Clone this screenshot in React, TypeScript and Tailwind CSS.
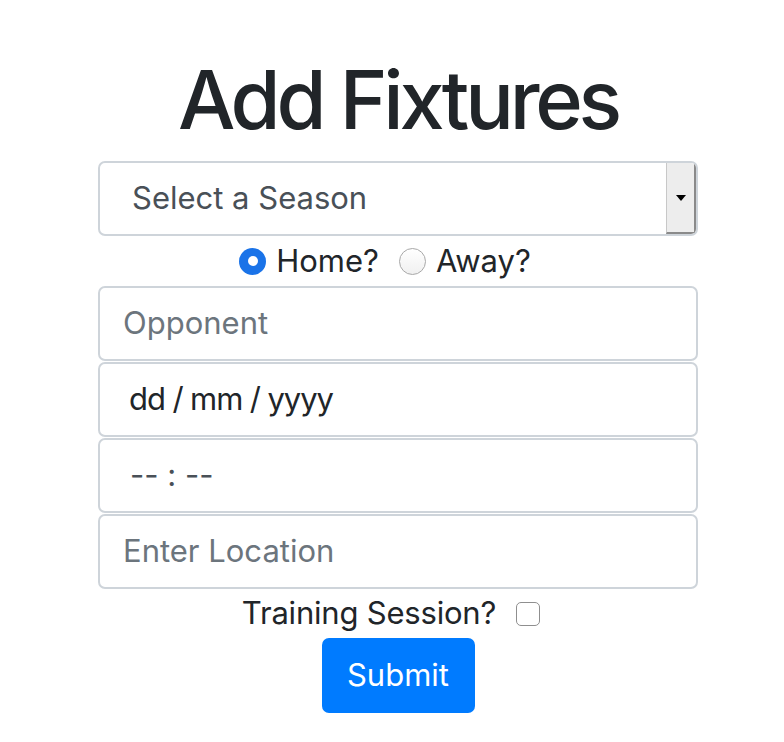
import React from "react";

export default function App() {
  const font = { fontFamily: 'Inter, "Liberation Sans", Arial, sans-serif' };
  return (
    <div className="w-[784px] h-[742px] bg-white text-[#212529]" style={font}>
      <div className="flex flex-col items-center pt-[54px] pl-[12px]">
        <h1 className="text-[81px] leading-[92px] font-medium tracking-[-4.2px]">Add Fixtures</h1>
        <div className="w-[600px] mt-[15px] flex flex-col">
          <div className="h-[75px] rounded-[7px] border-2 border-[#ced4da] flex items-stretch overflow-hidden">
            <div className="flex-1 flex items-center pl-[32px] text-[31px] text-[#495057]">Select a Season</div>
            <div className="w-[30px] bg-[#ededed] border-l border-[#c8c8c8] border-r-2 border-r-[#8a8a8a] border-b-2 border-b-[#8a8a8a] flex items-center justify-center">
              <div className="w-0 h-0 border-l-[5px] border-r-[5px] border-t-[6px] border-l-transparent border-r-transparent border-t-black" />
            </div>
          </div>
          <div className="h-[50px] flex items-center justify-center pr-[26px] text-[31px]">
            <span className="w-[27px] h-[27px] rounded-full bg-[#1a73e8] flex items-center justify-center">
              <span className="w-[10px] h-[10px] rounded-full bg-white" />
            </span>
            <span className="ml-[10px]">Home?</span>
            <span className="w-[27px] h-[27px] rounded-full border border-[#a8a8a8] bg-gradient-to-b from-white to-[#f0f0f0] ml-[20px]" />
            <span className="ml-[10px]">Away?</span>
          </div>
          <div className="flex flex-col gap-[1px]">
            <div className="h-[75px] rounded-[7px] border-2 border-[#ced4da] flex items-center pl-[23px] text-[31px] text-[#6c757d]">Opponent</div>
            <div className="h-[75px] rounded-[7px] border-2 border-[#ced4da] flex items-center pl-[29px] text-[31px] text-[#212529] tracking-[-1.1px]">dd / mm / yyyy</div>
            <div className="h-[75px] rounded-[7px] border-2 border-[#ced4da] flex items-center pl-[30px] text-[31px] text-[#495057]">-- : --</div>
            <div className="h-[75px] rounded-[7px] border-2 border-[#ced4da] flex items-center pl-[23px] text-[31px] text-[#6c757d]">Enter Location</div>
          </div>
          <div className="h-[49px] flex items-center justify-center pr-[14px] text-[31px] gap-[20px]">
            <span className="tracking-[-0.2px]">Training Session?</span>
            <span className="w-[24px] h-[24px] rounded-[5px] border border-[#8f8f8f] bg-white" />
          </div>
          <div className="flex justify-center">
            <button className="w-[153px] h-[75px] rounded-[7px] bg-[#007bff] text-white text-[31px]">Submit</button>
          </div>
        </div>
      </div>
    </div>
  );
}
